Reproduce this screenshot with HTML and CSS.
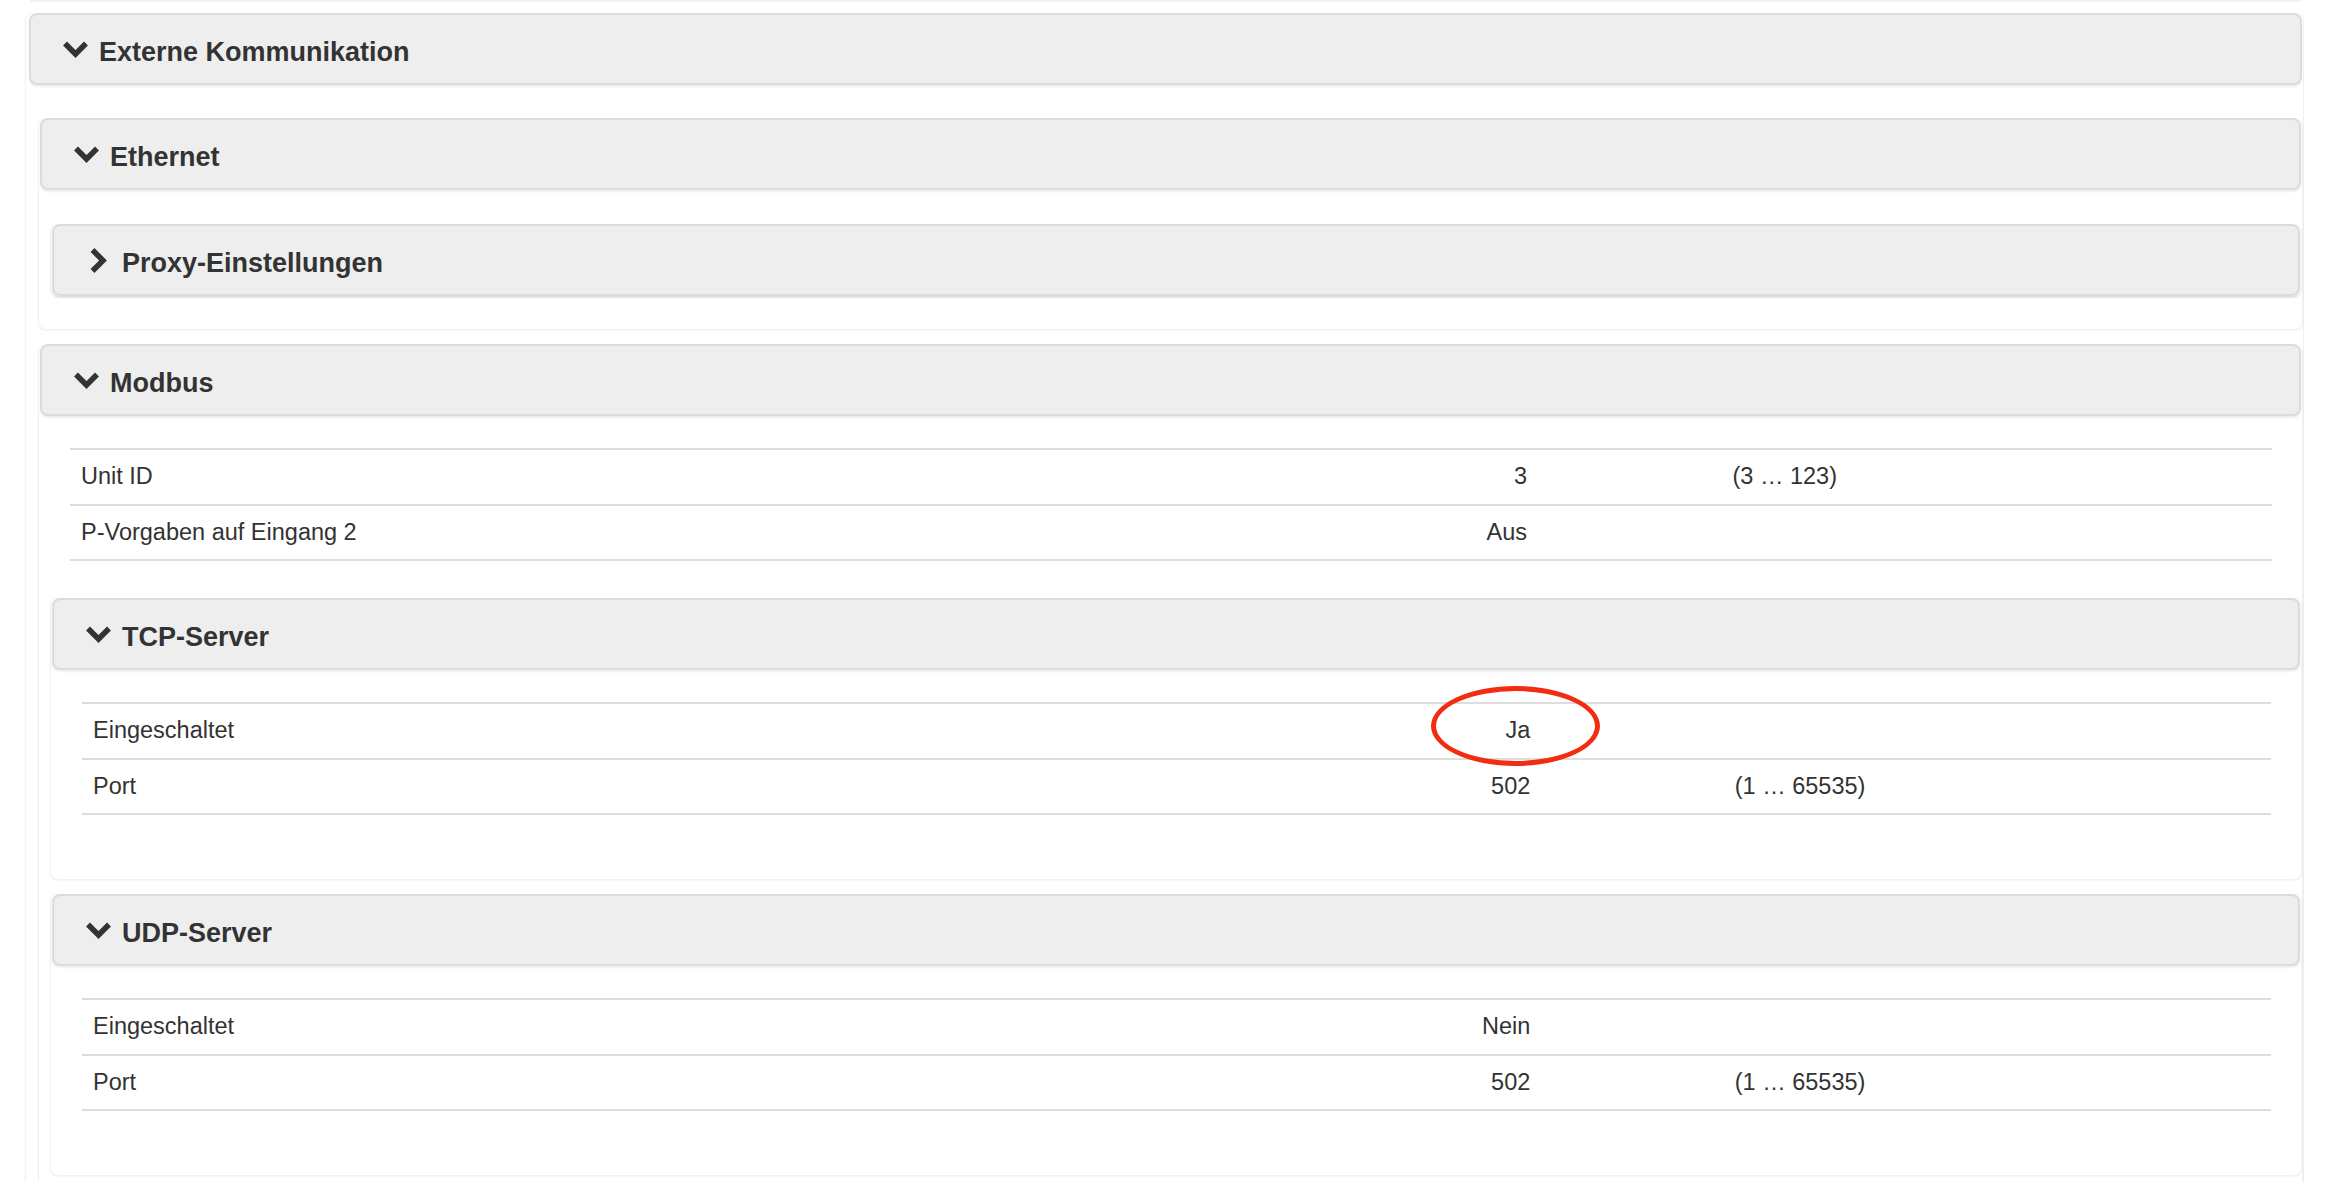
FILE: index.html
```html
<!DOCTYPE html>
<html lang="de">
<head>
<meta charset="utf-8">
<title>Externe Kommunikation</title>
<link rel="stylesheet" href="styles.css">
</head>
<body>
<div class="page">
  <div class="prev-edge"></div>

  <section class="panel panel-outer">
    <div class="panel-heading">
      <span class="chev"><svg class="ico-down" width="27" height="17" viewBox="0 0 27 17"><polyline points="3,2.5 13.5,13 24,2.5" fill="none" stroke="#333" stroke-width="5.5" stroke-linecap="butt" stroke-linejoin="miter"/></svg></span>
      <span class="title">Externe Kommunikation</span>
    </div>
    <div class="panel-body">

      <section class="panel">
        <div class="panel-heading">
          <span class="chev"><svg class="ico-down" width="27" height="17" viewBox="0 0 27 17"><polyline points="3,2.5 13.5,13 24,2.5" fill="none" stroke="#333" stroke-width="5.5" stroke-linecap="butt" stroke-linejoin="miter"/></svg></span>
          <span class="title">Ethernet</span>
        </div>
        <div class="panel-body panel-body-nested">
          <section class="panel panel-collapsed">
            <div class="panel-heading">
              <span class="chev"><svg class="ico-right" width="17" height="27" viewBox="0 0 17 27"><polyline points="2.5,3 13,13.5 2.5,24" fill="none" stroke="#333" stroke-width="5.5" stroke-linecap="butt" stroke-linejoin="miter"/></svg></span>
              <span class="title">Proxy-Einstellungen</span>
            </div>
          </section>
        </div>
      </section>

      <section class="panel">
        <div class="panel-heading">
          <span class="chev"><svg class="ico-down" width="27" height="17" viewBox="0 0 27 17"><polyline points="3,2.5 13.5,13 24,2.5" fill="none" stroke="#333" stroke-width="5.5" stroke-linecap="butt" stroke-linejoin="miter"/></svg></span>
          <span class="title">Modbus</span>
        </div>
        <div class="panel-body">
          <table class="props props-lead">
            <colgroup><col class="c-label"><col class="c-value"><col class="c-unit"><col class="c-range"></colgroup>
            <tbody>
              <tr><td class="label">Unit ID</td><td class="value">3</td><td class="unit"></td><td class="range">(3 … 123)</td></tr>
              <tr><td class="label">P-Vorgaben auf Eingang 2</td><td class="value">Aus</td><td class="unit"></td><td class="range"></td></tr>
            </tbody>
          </table>

          <section class="panel">
            <div class="panel-heading">
              <span class="chev"><svg class="ico-down" width="27" height="17" viewBox="0 0 27 17"><polyline points="3,2.5 13.5,13 24,2.5" fill="none" stroke="#333" stroke-width="5.5" stroke-linecap="butt" stroke-linejoin="miter"/></svg></span>
              <span class="title">TCP-Server</span>
            </div>
            <div class="panel-body">
              <table class="props">
                <colgroup><col class="c-label"><col class="c-value"><col class="c-unit"><col class="c-range"></colgroup>
                <tbody>
                  <tr><td class="label">Eingeschaltet</td><td class="value marked">Ja<span class="mark-ring"></span></td><td class="unit"></td><td class="range"></td></tr>
                  <tr><td class="label">Port</td><td class="value">502</td><td class="unit"></td><td class="range">(1 … 65535)</td></tr>
                </tbody>
              </table>
            </div>
          </section>

          <section class="panel">
            <div class="panel-heading">
              <span class="chev"><svg class="ico-down" width="27" height="17" viewBox="0 0 27 17"><polyline points="3,2.5 13.5,13 24,2.5" fill="none" stroke="#333" stroke-width="5.5" stroke-linecap="butt" stroke-linejoin="miter"/></svg></span>
              <span class="title">UDP-Server</span>
            </div>
            <div class="panel-body">
              <table class="props">
                <colgroup><col class="c-label"><col class="c-value"><col class="c-unit"><col class="c-range"></colgroup>
                <tbody>
                  <tr><td class="label">Eingeschaltet</td><td class="value">Nein</td><td class="unit"></td><td class="range"></td></tr>
                  <tr><td class="label">Port</td><td class="value">502</td><td class="unit"></td><td class="range">(1 … 65535)</td></tr>
                </tbody>
              </table>
            </div>
          </section>
        </div>
      </section>

    </div>
  </section>
</div>
</body>
</html>
```

FILE: styles.css
```css
html, body {
  margin: 0;
  padding: 0;
  background: #ffffff;
  overflow: hidden;
}

body {
  font-family: "Liberation Sans", Arial, Helvetica, sans-serif;
  color: #333333;
  height: 1182px;
}

.page {
  padding: 0 32px 0 25px;
}

.prev-edge {
  height: 1px;
  margin: 0 3px 12px 5px;
  background: #efefef;
  box-shadow: 0 1px 2px rgba(0, 0, 0, 0.05);
}

/* panels */
.panel {
  background: #ffffff;
  border: 1px solid #f1f1f1;
  border-top: none;
  border-radius: 8px;
  box-shadow: 0 1px 2px rgba(0, 0, 0, 0.05);
}

.panel + .panel {
  margin-top: 14px;
}

.panel-heading {
  height: 72px;
  box-sizing: border-box;
  margin: 0 1px 0 1px;
  padding-left: 30px;
  display: flex;
  align-items: center;
  background: #eeeeee;
  border: 2px solid #dcdcdc;
  border-radius: 8px;
  box-shadow: 0 2px 2px rgba(0, 0, 0, 0.07);
}

.panel-outer > .panel-heading {
  margin-left: 3px;
}

.chev {
  width: 28px;
  margin-right: 10px;
  display: flex;
  align-items: center;
  justify-content: center;
  flex: none;
}

.chev svg {
  display: block;
}

.title {
  font-size: 27px;
  font-weight: bold;
  color: #333333;
  line-height: normal;
  padding-top: 6px;
  white-space: nowrap;
}

.panel-body {
  padding: 33px 0 32px 11px;
}

.panel-body-nested {
  padding-top: 34px;
}

.panel-outer > .panel-body {
  padding-left: 12px;
}

/* property tables */
.props {
  width: calc(100% - 50px);
  margin: -1px 30px 32px 20px;
  border-collapse: separate;
  border-spacing: 0;
  table-layout: fixed;
  font-size: 23.5px;
  color: #333333;
}

.props-lead {
  margin-bottom: 37px;
}

.c-label { width: 50%; }
.c-value { width: 16.6667%; }
.c-unit  { width: 8.3333%; }
.c-range { width: 25%; }

.props td {
  border-top: 2px solid #dddddd;
  padding: 10px 11px;
  line-height: 33.5px;
  vertical-align: top;
  white-space: nowrap;
}

.props tr:last-child td {
  border-bottom: 2px solid #dddddd;
}

.props td.value {
  text-align: right;
}

.props td.range {
  text-align: left;
}

.props td.marked {
  position: relative;
}

.mark-ring {
  position: absolute;
  top: -18px;
  right: -59px;
  width: 169px;
  height: 80px;
  box-sizing: border-box;
  border: 5px solid #f22c10;
  border-radius: 50%;
  pointer-events: none;
}
```
